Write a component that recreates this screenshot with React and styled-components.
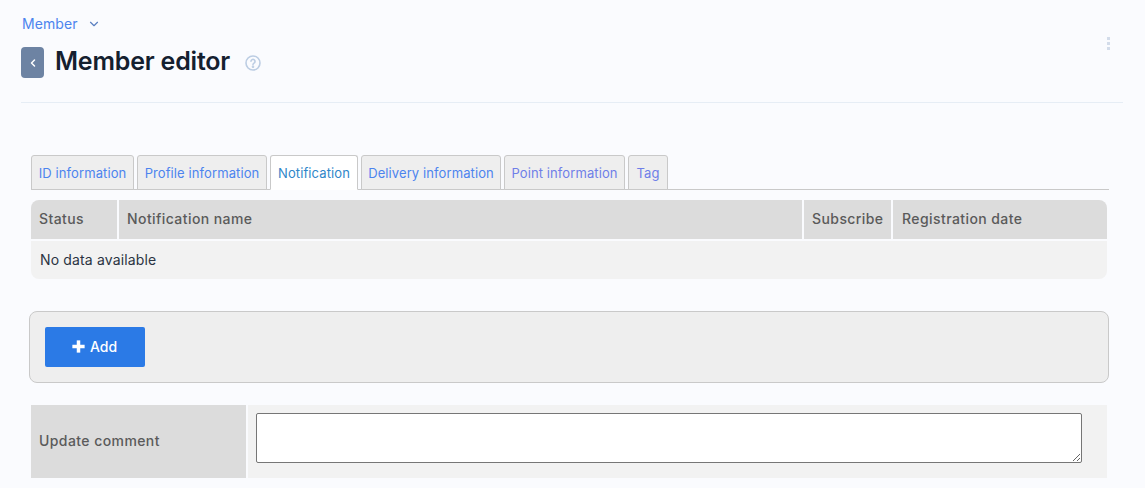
import React from "react";
import styled, { createGlobalStyle } from "styled-components";
import { ChevronDown, ChevronLeft, Plus } from "lucide-react";

const Global = createGlobalStyle`
  html, body { margin: 0; padding: 0; background: #fafbfe; }
  body { font-family: Inter, "Open Sans", sans-serif; overflow: hidden; }
`;
const Page = styled.div`
  width: 1145px; height: 488px; box-sizing: border-box; overflow: hidden;
  padding: 14px 22px 0 21px;
`;
const Header = styled.header`
  height: 89px; border-bottom: 1px solid #e6edf5; box-sizing: border-box; position: relative;
`;
const Crumb = styled.div`
  display: flex; align-items: center; gap: 9px; height: 19px; padding-left: 1px;
  color: #4c84ee; font-size: 14px; letter-spacing: 0.1px;
`;
const TitleRow = styled.div`
  display: flex; align-items: center; margin-top: 14px; height: 31px;
`;
const Back = styled.button`
  width: 23px; height: 31px; border: 0; padding: 0; border-radius: 4px; background: #6d83a3;
  color: #fff; display: flex; align-items: center; justify-content: center;
`;
const Title = styled.h1`
  margin: 0 0 2px 11px; font-size: 25px; font-weight: 600; color: #14202f; letter-spacing: -0.2px; line-height: 29px;
`;
const Help = styled.svg`
  margin-left: 15px; width: 16px; height: 16px; margin-top: 1px;
`;
const More = styled.div`
  position: absolute; top: 23px; right: 13px; display: flex; flex-direction: column; gap: 2px;
`;
const Dot = styled.span`
  width: 3px; height: 3px; background: #d3dcea; display: block;
`;
const Body = styled.main`
  padding: 52px 0 0 8px; width: 1080px;
`;
const Tabs = styled.nav`
  display: flex; gap: 3px; margin-left: 2px; height: 35px; box-sizing: border-box;
  border-bottom: 1px solid #c9c9c9;
`;
const Tab = styled.div`
  height: 35px; box-sizing: border-box; display: flex; align-items: center;
  width: ${p => p.$w}px; justify-content: center; white-space: nowrap;
  border: 1px solid #c9c9c9; border-radius: 3px 3px 0 0;
  border-bottom-color: ${p => (p.$active ? "#fff" : "#c9c9c9")};
  background: ${p => (p.$active ? "#fff" : "#eeeeee")};
  color: ${p => (p.$active ? "#2f86c9" : p.$purple ? "#6f7fe8" : "#4c84ee")};
  font-size: 13px; letter-spacing: 0.1px;
`;
const DataGrid = styled.div`
  margin: 10px 0 0 2px; width: 1076px; display: grid;
  grid-template-columns: 86px 683px 87px 1fr; column-gap: 2px; row-gap: 2px;
  border-radius: 8px; overflow: hidden;
`;
const Th = styled.div`
  height: 39px; box-sizing: border-box; background: #dcdcdc; color: #5a5a5a; font-weight: 500; font-size: 14px;
  padding: 0 0 2px ${p => p.$pad || 8}px; display: flex; align-items: center; letter-spacing: 0.42px; white-space: nowrap;
`;
const Empty = styled.div`
  grid-column: 1 / -1; height: 38px; box-sizing: border-box; background: #f2f2f2; color: #2b3442; font-size: 14px;
  padding: 0 0 2px 9px; display: flex; align-items: center; letter-spacing: 0.15px;
`;
const Panel = styled.section`
  margin-top: 32px; width: 1080px; height: 72px; box-sizing: border-box; background: #eeeeee;
  border: 1px solid #c9c9c9; border-radius: 8px; padding: 15px;
`;
const AddButton = styled.button`
  width: 100px; height: 40px; border: 0; padding: 0 0 1px; border-radius: 2px; background: #2b7ae6; color: #fff;
  font: 500 14px Inter, sans-serif; display: flex; align-items: center; justify-content: center; gap: 5px;
`;
const AddIcon = styled(Plus)`
  margin: 0 -4.5px;
`;
const FormRow = styled.div`
  margin: 22px 0 0 2px; width: 1076px; height: 73px; display: grid;
  grid-template-columns: 215px 1fr; column-gap: 2px;
`;
const FormLabel = styled.div`
  background: #dcdcdc; color: #5a5a5a; font-weight: 500; font-size: 14px; padding: 0 0 2px 8px;
  display: flex; align-items: center; letter-spacing: 0.42px;
`;
const FormCell = styled.div`
  background: #f2f2f2; padding: 8px 25px 0 8px;
`;
const Comment = styled.textarea`
  display: block; width: 100%; height: 50px; box-sizing: border-box; margin: 0;
  border: 1px solid #767676; border-radius: 2px; background: #fff;
`;

const tabs = [
  ["ID information", 103], ["Profile information", 130], ["Notification", 88, true],
  ["Delivery information", 140], ["Point information", 121], ["Tag", 40],
];

export default function App() {
  return (
    <Page>
      <Global />
      <Header>
        <Crumb>Member <ChevronDown size={14} strokeWidth={2} color="#5a7fc0" /></Crumb>
        <TitleRow>
          <Back aria-label="Back"><ChevronLeft size={12} strokeWidth={3} /></Back>
          <Title>Member editor</Title>
          <Help viewBox="0 0 16 16" fill="none" stroke="#bccde3" strokeWidth="1.6">
            <circle cx="8" cy="8" r="7" />
            <path d="M6 6.3a2 2 0 1 1 3 1.8c-.7.4-1 .8-1 1.5" strokeLinecap="round" />
            <circle cx="8" cy="11.7" r=".5" />
          </Help>
        </TitleRow>
        <More><Dot /><Dot /><Dot /></More>
      </Header>
      <Body>
        <Tabs>
          {tabs.map(([t, w, a], i) => <Tab key={t} $w={w} $active={a} $purple={i > 3}>{t}</Tab>)}
        </Tabs>
        <DataGrid>
          <Th>Status</Th><Th>Notification name</Th><Th>Subscribe</Th><Th $pad={9}>Registration date</Th>
          <Empty>No data available</Empty>
        </DataGrid>
        <Panel>
          <AddButton><AddIcon size={21} strokeWidth={4} strokeLinecap="butt" />Add</AddButton>
        </Panel>
        <FormRow>
          <FormLabel>Update comment</FormLabel>
          <FormCell><Comment /></FormCell>
        </FormRow>
      </Body>
    </Page>
  );
}
